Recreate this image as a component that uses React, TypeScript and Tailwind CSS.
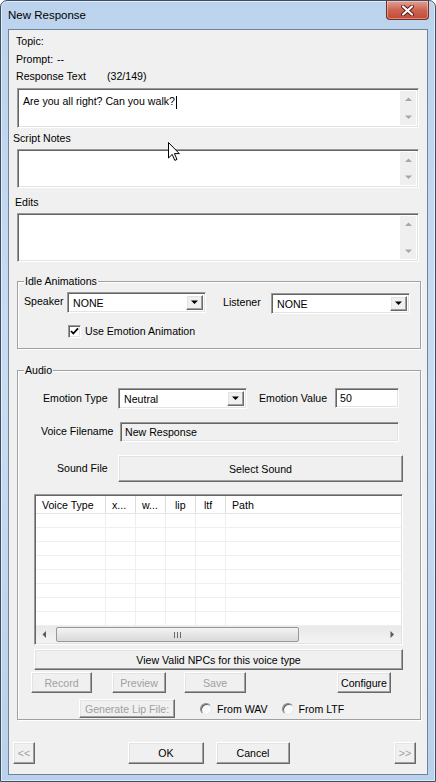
import React from 'react';

// classic win32 edge styles
const sunken =
  'border border-t-[#9a9a9a] border-l-[#9a9a9a] border-r-white border-b-white shadow-[inset_1px_1px_0_#646464,inset_-1px_-1px_0_#e3e3e3]';
const raised =
  'border border-t-white border-l-white border-r-[#696969] border-b-[#696969] shadow-[inset_-1px_-1px_0_#a0a0a0,inset_1px_1px_0_#e3e3e3] bg-[#f0f0f0]';
const groupBox =
  'relative ml-[8px] w-[404px] border border-[#a0a0a0] shadow-[1px_1px_0_#fff,inset_1px_1px_0_#fff]';

type Dir = 'up' | 'down' | 'left' | 'right';

function Arrow({ dir, color }: { dir: Dir; color: string }) {
  const pts: Record<Dir, string> = {
    up: '0,4 3.5,0.5 7,4',
    down: '0,0.5 3.5,4 7,0.5',
    left: '4,0 0.5,3.5 4,7',
    right: '0.5,0 4,3.5 0.5,7',
  };
  const vertical = dir === 'up' || dir === 'down';
  return (
    <svg width={vertical ? 7 : 5} height={vertical ? 5 : 7} viewBox={vertical ? '0 0 7 5' : '0 0 5 7'}>
      <polygon points={pts[dir]} fill={color} />
    </svg>
  );
}

function VScroll() {
  return (
    <div className="flex h-full w-[16px] shrink-0 flex-col justify-between bg-[#efefef]">
      <div className="flex h-[16px] items-center justify-center">
        <Arrow dir="up" color="#a7a7a7" />
      </div>
      <div className="flex h-[16px] items-center justify-center">
        <Arrow dir="down" color="#a7a7a7" />
      </div>
    </div>
  );
}

function TextArea({ className, children }: { className: string; children?: React.ReactNode }) {
  return (
    <div className={`ml-[8px] flex w-[402px] bg-white p-[2px] ${sunken} ${className}`}>
      <div className="flex-1 pl-[3px] pt-[3px]">{children}</div>
      <VScroll />
    </div>
  );
}

function Combo({ value, className }: { value: string; className: string }) {
  return (
    <div className={`flex items-stretch bg-white p-[2px] ${sunken} ${className}`}>
      <div className="flex flex-1 items-center pl-[3px]">{value}</div>
      <div className={`flex w-[17px] items-center justify-center ${raised}`}>
        <Arrow dir="down" color="#000" />
      </div>
    </div>
  );
}

function Btn({
  label,
  className,
  disabled,
}: {
  label: string;
  className: string;
  disabled?: boolean;
}) {
  return (
    <div
      className={`flex items-center justify-center ${raised} ${className} ${
        disabled ? 'text-[#a0a0a0]' : 'text-black'
      }`}
    >
      {label}
    </div>
  );
}

function Radio({ label, className }: { label: string; className: string }) {
  return (
    <div className={`flex items-center ${className}`}>
      <div className="h-[12px] w-[12px] rounded-full border border-[#8a8a8a] border-b-[#e8e8e8] border-r-[#e8e8e8] bg-[#fafafa] shadow-[inset_1px_1px_0_#5e5e5e]" />
      <span className="ml-[5px]">{label}</span>
    </div>
  );
}

const columns = [
  { label: 'Voice Type', cls: 'w-[70px] pl-[6px]' },
  { label: 'x...', cls: 'w-[30px] pl-[6px]' },
  { label: 'w...', cls: 'w-[30px] pl-[6px]' },
  { label: 'lip', cls: 'w-[30px] pl-[9px]' },
  { label: 'ltf', cls: 'w-[30px] pl-[8px]' },
  { label: 'Path', cls: 'flex-1 pl-[6px]' },
];

function ListView() {
  const rows = Array.from({ length: 8 });
  return (
    <div className={`ml-[16px] mt-[12px] flex h-[151px] w-[369px] flex-col bg-white ${sunken} p-[1px]`}>
      <div className="flex h-[18px] shrink-0 border-b border-[#e5e5e5]">
        {columns.map((c, i) => (
          <div
            key={c.label}
            className={`flex items-center ${c.cls} ${i < columns.length - 1 ? 'border-r border-[#dcdcdc]' : ''}`}
          >
            {c.label}
          </div>
        ))}
      </div>
      <div className="flex-1 overflow-hidden">
        {rows.map((_, r) => (
          <div key={r} className="flex h-[14px] border-b border-[#efefef]">
            {columns.map((c, i) => (
              <div
                key={c.label}
                className={`${c.cls} ${i < columns.length - 1 ? 'border-r border-[#efefef]' : ''}`}
              />
            ))}
          </div>
        ))}
      </div>
      <div className="flex h-[17px] shrink-0 items-center bg-gradient-to-b from-[#e9e9e9] to-[#f3f3f3]">
        <div className="flex h-full w-[17px] items-center justify-center">
          <Arrow dir="left" color="#5a5a5a" />
        </div>
        <div className="ml-[3px] flex h-[15px] w-[243px] items-center justify-center rounded-[2px] border border-[#979797] bg-gradient-to-b from-[#f4f4f4] to-[#d9d9d9]">
          <div className="flex gap-[2px]">
            <div className="h-[6px] w-[1px] bg-[#6b6b6b]" />
            <div className="h-[6px] w-[1px] bg-[#6b6b6b]" />
            <div className="h-[6px] w-[1px] bg-[#6b6b6b]" />
          </div>
        </div>
        <div className="ml-auto flex h-full w-[17px] items-center justify-center">
          <Arrow dir="right" color="#5a5a5a" />
        </div>
      </div>
    </div>
  );
}

export default function App() {
  return (
    <div className="relative h-[782px] w-[436px] overflow-hidden rounded-t-[7px] border border-[#3d4f66] bg-gradient-to-b from-[#bcd3ed] via-[#c9dcf1] to-[#bad1eb] font-['Liberation_Sans',Arial,sans-serif] text-[10.6px] leading-[14px] text-black shadow-[inset_0_0_0_1px_rgba(255,255,255,0.55)]">
      {/* title bar */}
      <div className="flex h-[28px] items-center pl-[7px] text-[11.5px] text-black">New Response</div>
      <div className="absolute right-[6px] top-0 flex h-[19px] w-[43px] items-center justify-center rounded-b-[4px] border border-t-0 border-[#7b2a1e] bg-gradient-to-b from-[#e3a193] via-[#cc6452] to-[#c24a36] shadow-[inset_0_0_0_1px_rgba(255,255,255,0.35)]">
        <svg width="13" height="11" viewBox="0 0 13 11">
          <path d="M2 1.5 L11 9.5 M11 1.5 L2 9.5" stroke="#5a1a10" strokeWidth="4" strokeLinecap="round" />
          <path d="M2 1.5 L11 9.5 M11 1.5 L2 9.5" stroke="#ffffff" strokeWidth="2.2" strokeLinecap="round" />
        </svg>
      </div>

      {/* client area */}
      <div className="ml-[7px] flex h-[746px] w-[420px] flex-col border border-[#6f839b] bg-[#f0f0f0]">
        <div className="ml-[7px] mt-[4px] h-[14px]">Topic:</div>
        <div className="ml-[7px] mt-[4px] h-[14px]">
          Prompt:<span className="ml-[4px]">--</span>
        </div>
        <div className="ml-[7px] mt-[3px] flex h-[14px]">
          <span className="w-[91px]">Response Text</span>
          <span>(32/149)</span>
        </div>
        <TextArea className="mt-[5px] h-[40px]">
          Are you all right? Can you walk?
          <span className="ml-[1px] inline-block h-[13px] w-[1px] bg-black align-middle" />
        </TextArea>
        <div className="ml-[4px] mt-[3px] h-[14px]">Script Notes</div>
        <TextArea className="mt-[4px] h-[39px]" />
        <div className="ml-[6px] mt-[7px] h-[14px]">Edits</div>
        <TextArea className="mt-[4px] h-[49px]" />

        {/* Idle Animations */}
        <div className={`${groupBox} mt-[19px] h-[68px]`}>
          <div className="absolute -top-[8px] left-[6px] bg-[#f0f0f0] px-[1px]">Idle Animations</div>
          <div className="mt-[10px] flex items-start">
            <span className="ml-[6px] mt-[2px] w-[43px]">Speaker</span>
            <Combo value="NONE" className="h-[21px] w-[139px]" />
            <span className="ml-[17px] mt-[3px] w-[48px]">Listener</span>
            <Combo value="NONE" className="mt-[1px] h-[21px] w-[139px]" />
          </div>
          <div className="mt-[10px] flex items-center">
            <div className={`ml-[50px] flex h-[13px] w-[13px] items-center justify-center bg-white ${sunken}`}>
              <svg width="9" height="9" viewBox="0 0 9 9">
                <polyline points="1,4 3.3,6.5 8,1.3" fill="none" stroke="#000" strokeWidth="1.8" />
              </svg>
            </div>
            <span className="ml-[4px]">Use Emotion Animation</span>
          </div>
        </div>

        {/* Audio */}
        <div className={`${groupBox} mt-[21px] h-[350px]`}>
          <div className="absolute -top-[8px] left-[6px] bg-[#f0f0f0] px-[1px]">Audio</div>
          <div className="mt-[17px] flex items-start">
            <span className="ml-[25px] mt-[3px] w-[75px]">Emotion Type</span>
            <Combo value="Neutral" className="h-[21px] w-[129px]" />
            <span className="ml-[12px] mt-[3px] w-[76px]">Emotion Value</span>
            <div className={`flex h-[20px] w-[64px] items-center bg-white pl-[4px] ${sunken}`}>50</div>
          </div>
          <div className="mt-[13px] flex items-start">
            <span className="ml-[23px] mt-[2px] w-[79px]">Voice Filename</span>
            <div className={`flex h-[20px] w-[279px] items-center bg-[#f0f0f0] pl-[4px] ${sunken}`}>
              New Response
            </div>
          </div>
          <div className="mt-[13px] flex items-start">
            <span className="ml-[39px] mt-[6px] w-[61px]">Sound File</span>
            <Btn label="Select Sound" className="h-[27px] w-[285px]" />
          </div>
          <ListView />
          <Btn label="View Valid NPCs for this voice type" className="ml-[16px] mt-[4px] h-[21px] w-[369px]" />
          <div className="mt-[2px] flex h-[21px]">
            <Btn label="Record" disabled className="ml-[13px] h-[21px] w-[61px]" />
            <Btn label="Preview" disabled className="ml-[20px] h-[21px] w-[54px]" />
            <Btn label="Save" disabled className="ml-[18px] h-[21px] w-[62px]" />
            <Btn label="Configure" className="ml-[91px] h-[21px] w-[54px]" />
          </div>
          <div className="mt-[6px] flex h-[19px] items-center">
            <Btn label="Generate Lip File:" disabled className="ml-[61px] h-[19px] w-[96px]" />
            <Radio label="From WAV" className="ml-[25px]" />
            <Radio label="From LTF" className="ml-[14px]" />
          </div>
        </div>

        {/* bottom buttons */}
        <div className="mt-[22px] flex h-[22px]">
          <Btn label="<<" disabled className="ml-[4px] h-[22px] w-[22px]" />
          <Btn label="OK" className="ml-[93px] h-[22px] w-[76px]" />
          <Btn label="Cancel" className="ml-[12px] h-[22px] w-[74px]" />
          <Btn label=">>" disabled className="ml-[104px] h-[22px] w-[22px]" />
        </div>
      </div>

      {/* mouse pointer over the dialog */}
      <svg className="absolute left-[167px] top-[141px]" width="13" height="20" viewBox="0 0 13 20">
        <path
          d="M0.5 0.5 L0.5 16 L4.2 12.4 L6.8 18.4 L9 17.4 L6.4 11.6 L11.3 11.6 Z"
          fill="#ffffff"
          stroke="#000000"
          strokeWidth="1"
          strokeLinejoin="round"
        />
      </svg>
    </div>
  );
}
